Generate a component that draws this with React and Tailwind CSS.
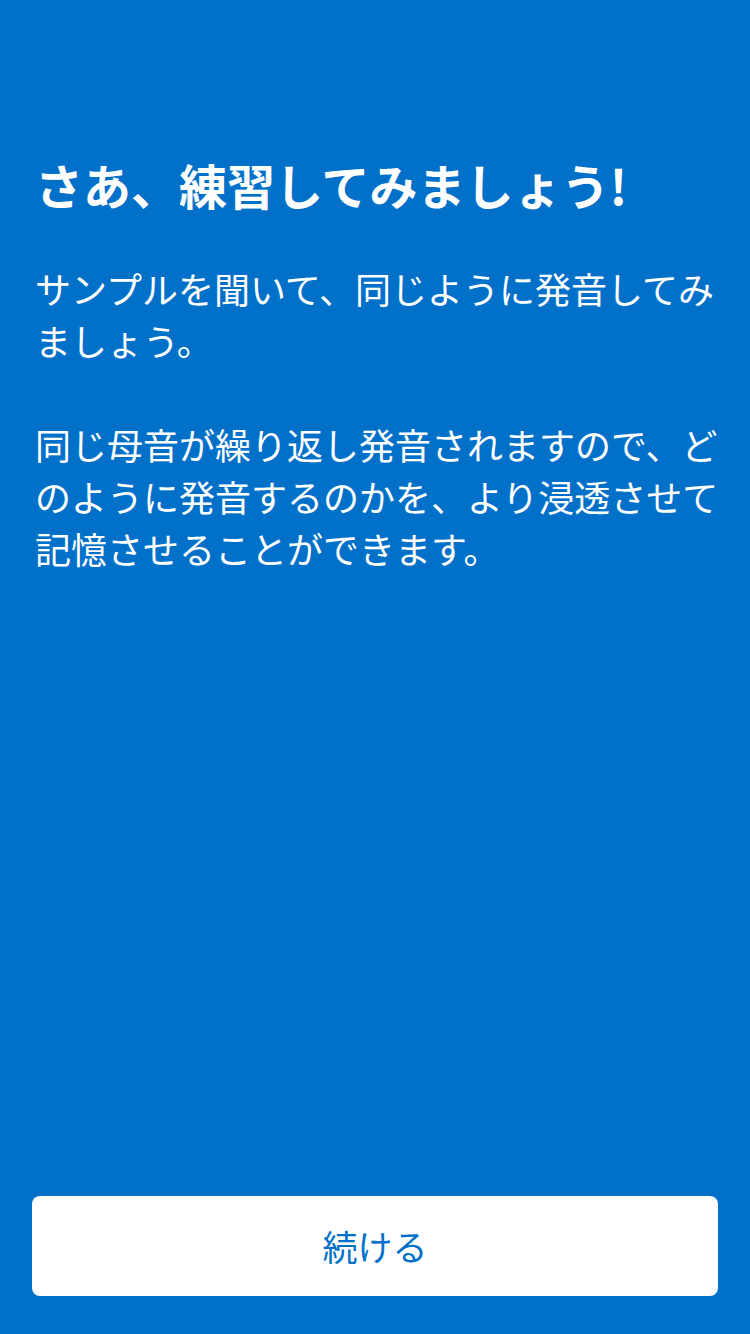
import React from 'react'

export default function App(){
  return (
    <div className="flex h-[1334px] w-[750px] flex-col bg-[#0070c9] text-white" style={{fontFamily:'"Noto Sans CJK JP", "Noto Sans", sans-serif'}}>
      <div className="flex-1 pl-[35px] pr-[20px] pt-[152px]">
        <h1 className="text-[48px] font-bold leading-[64px]">さあ、練習してみましょう!</h1>
        <div className="mt-[46px] text-[36px] leading-[52px]">
          <p>サンプルを聞いて、同じように発音してみましょう。</p>
          <p className="mt-[52px]">同じ母音が繰り返し発音されますので、どのように発音するのかを、より浸透させて記憶させることができます。</p>
        </div>
      </div>
      <div className="px-8 pb-[38px]">
        <button className="flex h-[100px] w-full items-center justify-center rounded-lg bg-white text-[35px] text-[#0070c9]">続ける</button>
      </div>
    </div>
  )
}
